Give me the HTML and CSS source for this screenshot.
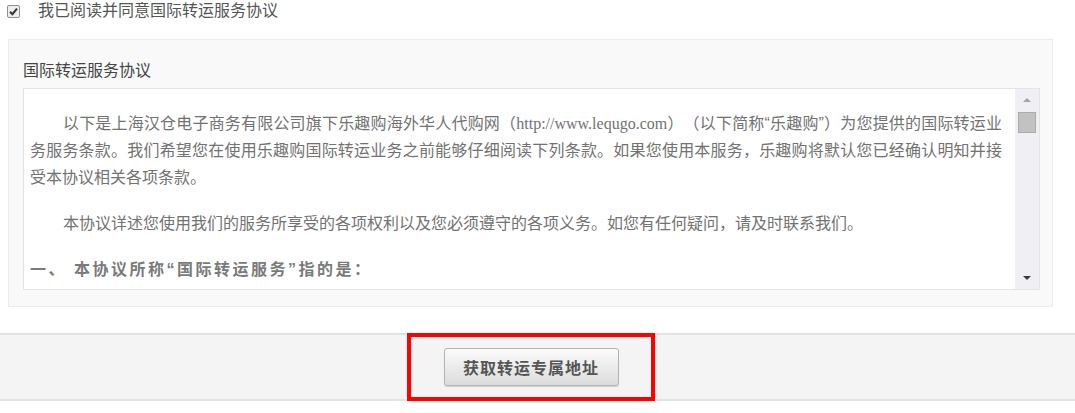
FILE: index.html
```html
<!DOCTYPE html>
<html lang="zh-CN">
<head>
<meta charset="utf-8">
<title>国际转运服务协议</title>
<link rel="stylesheet" href="styles.css">
</head>
<body>
<div class="agree">
  <span class="cb"><svg width="13" height="13" viewBox="0 0 13 13"><rect x="0.5" y="0.5" width="12" height="12" rx="1.5" fill="#eeeeee" stroke="#8f8f8f"/><path d="M3 6.8 L5.4 9.2 L10 3.6" fill="none" stroke="#333" stroke-width="2"/></svg></span>
  <span class="agree-text">我已阅读并同意国际转运服务协议</span>
</div>
<div class="panel">
  <div class="panel-title">国际转运服务协议</div>
  <div class="terms">
    <div class="terms-text">
      <p class="indent">以下是上海汉仓电子商务有限公司旗下乐趣购海外华人代购网（<span class="url">http://www.lequgo.com</span>）（以下简称“乐趣购”）为您提供的国际转运业务服务条款。我们希望您在使用乐趣购国际转运业务之前能够仔细阅读下列条款。如果您使用本服务，乐趣购将默认您已经确认明知并接受本协议相关各项条款。</p>
      <p class="indent">本协议详述您使用我们的服务所享受的各项权利以及您必须遵守的各项义务。如您有任何疑问，请及时联系我们。</p>
      <p class="heading">一、 本协议所称“国际转运服务”指的是：</p>
    </div>
    <div class="scrollbar">
      <span class="sb-btn"><span class="arrow-up"></span></span>
      <span class="thumb"></span>
      <span class="sb-space"></span>
      <span class="sb-btn"><span class="arrow-down"></span></span>
    </div>
  </div>
</div>
<div class="action-bar">
  <div class="highlight">
    <button class="btn" type="button">获取转运专属地址</button>
  </div>
</div>
</body>
</html>
```
FILE: styles.css
```css
* { box-sizing: border-box; }
html, body { margin: 0; padding: 0; background: #fff; }
body {
  font-family: "Liberation Sans", "Noto Sans CJK SC", sans-serif;
  font-size: 16px;
  color: #666;
  text-spacing-trim: space-all;
}
.agree {
  display: flex;
  align-items: center;
  height: 22px;
  padding-left: 7px;
}
.cb { display: flex; width: 13px; height: 13px; margin-right: 18px; }
.agree-text { color: #555; line-height: 22px; }

.panel {
  margin: 17px 22px 0 8px;
  background: #f9f9f9;
  border: 1px solid #ececec;
  padding: 19px 12px 16px 14px;
}
.panel-title {
  line-height: 24px;
  color: #444;
  margin-bottom: 5px;
}
.terms {
  display: flex;
  height: 202px;
  background: #fff;
  border: 1px solid #e4e4e4;
}
.terms-text {
  flex: 1;
  overflow: hidden;
  padding: 21px 13px 0 6px;
  color: #727272;
}
.terms-text p {
  margin: 0 0 19px;
  line-height: 27px;
  text-align: justify;
}
.terms-text .indent { text-indent: 33px; }
.url { font-family: "Liberation Serif", serif; }
.terms-text .heading {
  font-weight: bold;
  color: #7a7a7a;
  letter-spacing: 2.5px;
}
.scrollbar {
  width: 24px;
  display: flex;
  flex-direction: column;
  align-items: center;
  background: #f0f0f4;
}
.sb-btn {
  height: 22px;
  width: 100%;
  display: flex;
  align-items: center;
  justify-content: center;
}
.arrow-up {
  width: 0; height: 0;
  border-left: 4px solid transparent;
  border-right: 4px solid transparent;
  border-bottom: 4px solid #a3a3a3;
}
.arrow-down {
  width: 0; height: 0;
  border-left: 4px solid transparent;
  border-right: 4px solid transparent;
  border-top: 4px solid #3c3c3c;
}
.thumb {
  width: 18px;
  height: 21px;
  margin-top: 1px;
  background: #c2c2c2;
  border: 1px solid #ababab;
}
.sb-space { flex: 1; }

.action-bar {
  margin-top: 26px;
  height: 68px;
  display: flex;
  justify-content: center;
  padding-right: 13px;
  background: #f4f4f4;
  border-top: 2px solid #e3e3e3;
  border-bottom: 2px solid #e3e3e3;
}
.highlight {
  width: 248px;
  height: 68px;
  margin: -2px 0;
  border: 4px solid #ff0000;
  display: flex;
  align-items: center;
  justify-content: center;
}
.btn {
  width: 175px;
  height: 38px;
  font-family: "Liberation Sans", "Noto Sans CJK SC", sans-serif;
  font-size: 16px;
  font-weight: bold;
  letter-spacing: 1px;
  color: #555;
  background: linear-gradient(#fbfbfb, #dcdcdc);
  border: 1px solid #b3b3b3;
  border-radius: 3px;
  box-shadow: 0 1px 1px rgba(0, 0, 0, 0.15);
  padding: 0;
  cursor: pointer;
}
```
